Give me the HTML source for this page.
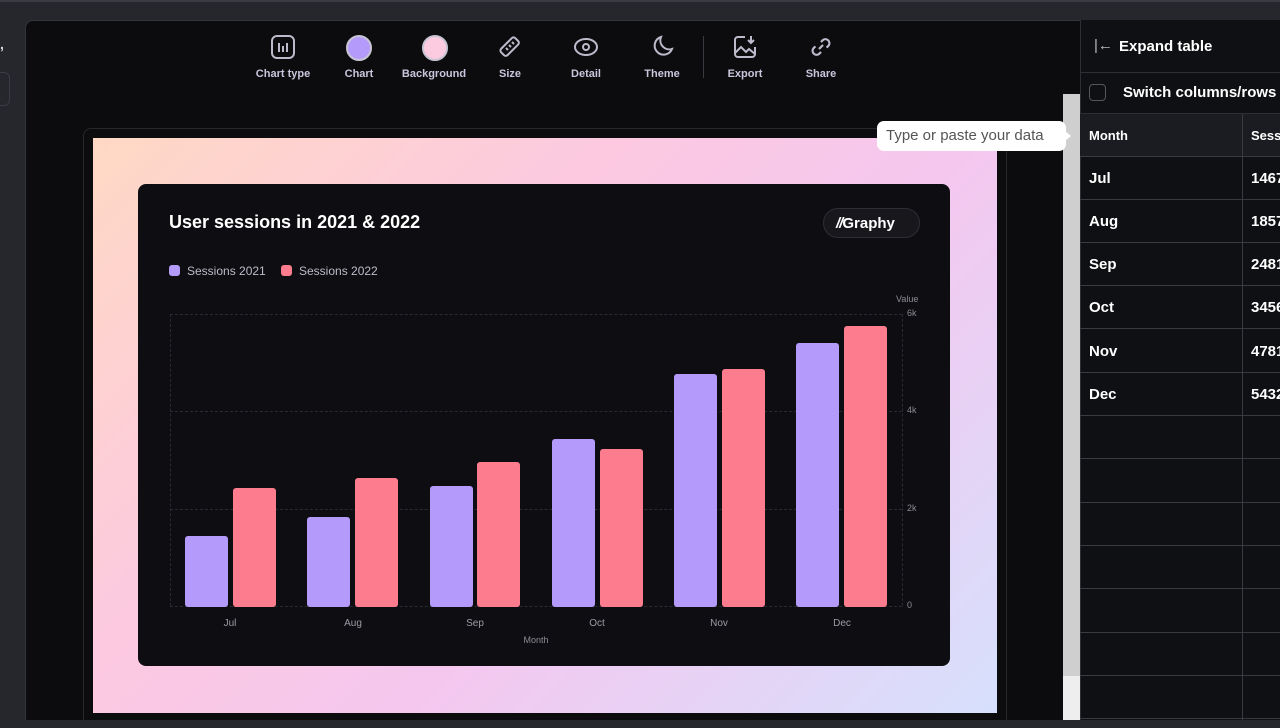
<!DOCTYPE html>
<html><head><meta charset="utf-8"><style>
*{margin:0;padding:0;box-sizing:border-box}
body{width:1280px;height:720px;overflow:hidden;background:#25272d;font-family:"Liberation Sans",sans-serif;position:relative}
.a{position:absolute}
.tb{color:#c9c6dc;font-size:11px;text-align:center;width:80px;font-weight:bold}
.ic{position:absolute;width:26px;height:26px}
.bar{position:absolute;width:43px;border-radius:3px}
.p{background:#b49bfb}.r{background:#fd7d8e}
.gl{position:absolute;left:170px;width:732px;border-top:1px dashed #2a2a32}
.yl{position:absolute;left:907px;color:#8b8b95;font-size:9px}
.xl{position:absolute;top:618px;color:#9b9ba5;font-size:10px;width:60px;text-align:center}
.row{position:absolute;left:1080px;width:200px;height:43px;border-bottom:1px solid #3a3b40;color:#fff;font-weight:bold;font-size:15px}
.row span{position:absolute;left:9px;top:13px}
.row b{position:absolute;left:171px;top:13px}
</style></head><body>
<div class="a" style="left:0;top:0;width:1280px;height:2px;background:#3a3c44"></div>
<div class="a" style="left:0;top:72px;width:10px;height:34px;border:1px solid #3a3c44;border-left:none;border-radius:0 6px 6px 0"></div>
<div class="a" style="left:0;top:36px;color:#ddd;font-size:14px;font-weight:bold">,</div>
<div class="a" style="left:25px;top:20px;width:1060px;height:700px;background:#0c0c0f;border-radius:8px 0 0 0;border-top:1px solid #33353c;border-left:1px solid #33353c"></div>
<svg class="ic" style="left:270px;top:34px" viewBox="0 0 26 26" fill="none" stroke="#bdbbcb" stroke-width="2"><rect x="2" y="2" width="22" height="22" rx="5"/><path d="M9 9v9M13 12v6M17 9v9"/></svg>
<div class="a tb" style="left:243px;top:68px">Chart type</div>
<div class="a" style="left:346px;top:35px;width:26px;height:26px;border-radius:50%;background:#b49bfb;border:2px solid #c8c6d4"></div>
<div class="a tb" style="left:319px;top:68px">Chart</div>
<div class="a" style="left:422px;top:35px;width:26px;height:26px;border-radius:50%;background:#fccbe0;border:2px solid #c8c6d4"></div>
<div class="a tb" style="left:394px;top:68px">Background</div>
<svg class="ic" style="left:497px;top:34px" viewBox="0 0 26 26" fill="none" stroke="#bdbbcb" stroke-width="2"><rect x="3" y="8" width="20" height="9" rx="2.5" transform="rotate(-45 13 13)"/><path d="M9 14l2 2M12 11l2 2M15 8l2 2"/></svg>
<div class="a tb" style="left:470px;top:68px">Size</div>
<svg class="ic" style="left:573px;top:34px" viewBox="0 0 26 26" fill="none" stroke="#bdbbcb" stroke-width="2"><ellipse cx="13" cy="13" rx="11" ry="8"/><circle cx="13" cy="13" r="3"/></svg>
<div class="a tb" style="left:546px;top:68px">Detail</div>
<svg class="ic" style="left:649px;top:34px" viewBox="0 0 26 26" fill="none" stroke="#bdbbcb" stroke-width="2"><path d="M12 3a9 9 0 1 0 11 12A9 9 0 0 1 12 3z"/></svg>
<div class="a tb" style="left:622px;top:68px">Theme</div>
<div class="a" style="left:703px;top:36px;width:1px;height:42px;background:#3a3b42"></div>
<svg class="ic" style="left:732px;top:34px" viewBox="0 0 26 26" fill="none" stroke="#bdbbcb" stroke-width="2"><path d="M13 3H6a3 3 0 0 0-3 3v14a3 3 0 0 0 3 3h14a3 3 0 0 0 3-3v-7"/><path d="M3 19l6-6 5 5 3-3 6 5"/><path d="M19 2v7M16 6l3 3 3-3"/></svg>
<div class="a tb" style="left:705px;top:68px">Export</div>
<svg class="ic" style="left:808px;top:34px" viewBox="0 0 26 26" fill="none" stroke="#bdbbcb" stroke-width="2.2"><path d="M11 15l4-4"/><path d="M13 8l2-2a4 4 0 0 1 5.6 5.6l-2 2"/><path d="M13 18l-2 2a4 4 0 0 1-5.6-5.6l2-2"/></svg>
<div class="a tb" style="left:781px;top:68px">Share</div>
<div class="a" style="left:83px;top:128px;width:924px;height:600px;border:1px solid #26272c;border-radius:8px"></div>
<div class="a" style="left:93px;top:138px;width:904px;height:575px;background:linear-gradient(135deg,#ffd9c4 0%,#fcc9e0 35%,#f5c7ef 60%,#d6e0fc 100%)"></div>
<div class="a" style="left:138px;top:184px;width:812px;height:482px;background:#0e0e12;border-radius:8px"></div>
<div class="a" style="left:169px;top:212px;color:#fff;font-size:18px;font-weight:bold">User sessions in 2021 &amp; 2022</div>
<div class="a" style="left:823px;top:208px;width:97px;height:30px;border-radius:15px;background:#17171c;border:1px solid #2e2e36;color:#fff;font-weight:bold;font-size:15px;padding:6px 0 0 12px"><i style="font-style:italic;letter-spacing:-1px">//</i>Graphy</div>
<div class="a" style="left:169px;top:265px;width:11px;height:11px;border-radius:3px;background:#b49bfb"></div>
<div class="a" style="left:187px;top:264px;color:#bcbac8;font-size:12px">Sessions 2021</div>
<div class="a" style="left:281px;top:265px;width:11px;height:11px;border-radius:3px;background:#fd7d8e"></div>
<div class="a" style="left:299px;top:264px;color:#bcbac8;font-size:12px">Sessions 2022</div>
<div class="a" style="left:896px;top:294px;color:#8b8b95;font-size:9px">Value</div>
<div class="gl" style="top:314px"></div><div class="gl" style="top:411px"></div><div class="gl" style="top:509px"></div><div class="gl" style="top:606px"></div>
<div class="a" style="left:170px;top:314px;height:292px;border-left:1px dashed #2a2a32"></div>
<div class="a" style="left:902px;top:314px;height:292px;border-left:1px dashed #2a2a32"></div>
<div class="yl" style="top:308px">6k</div><div class="yl" style="top:405px">4k</div><div class="yl" style="top:503px">2k</div><div class="yl" style="top:600px">0</div>
<div class="bar p" style="left:185px;top:536px;height:71px"></div><div class="bar r" style="left:233px;top:488px;height:119px"></div>
<div class="bar p" style="left:307px;top:517px;height:90px"></div><div class="bar r" style="left:355px;top:478px;height:129px"></div>
<div class="bar p" style="left:430px;top:486px;height:121px"></div><div class="bar r" style="left:477px;top:462px;height:145px"></div>
<div class="bar p" style="left:552px;top:439px;height:168px"></div><div class="bar r" style="left:600px;top:449px;height:158px"></div>
<div class="bar p" style="left:674px;top:374px;height:233px"></div><div class="bar r" style="left:722px;top:369px;height:238px"></div>
<div class="bar p" style="left:796px;top:343px;height:264px"></div><div class="bar r" style="left:844px;top:326px;height:281px"></div>
<div class="xl" style="left:200px">Jul</div><div class="xl" style="left:323px">Aug</div><div class="xl" style="left:445px">Sep</div><div class="xl" style="left:567px">Oct</div><div class="xl" style="left:689px">Nov</div><div class="xl" style="left:812px">Dec</div>
<div class="a" style="left:506px;top:635px;color:#8b8b95;font-size:9px;width:60px;text-align:center">Month</div>
<div class="a" style="left:1063px;top:94px;width:17px;height:582px;background:#cfcfcf"></div>
<div class="a" style="left:1063px;top:676px;width:17px;height:44px;background:#eeeeee"></div>
<div class="a" style="left:877px;top:121px;width:189px;height:30px;background:#fff;border-radius:7px;color:#555;font-size:15px;padding:6px 0 0 9px;white-space:nowrap">Type or paste your data</div>
<div class="a" style="left:1065px;top:131px;width:0;height:0;border-top:5px solid transparent;border-bottom:5px solid transparent;border-left:6px solid #fff"></div>
<div class="a" style="left:1080px;top:20px;width:200px;height:700px;background:#0f1013;border-left:1px solid #2e2f35"></div>
<div class="a" style="left:1080px;top:72px;width:200px;height:1px;background:#2e2f35"></div>
<div class="a" style="left:1080px;top:113px;width:200px;height:1px;background:#2e2f35"></div>
<div class="a" style="left:1094px;top:37px;color:#bbb;font-size:15px">|←</div>
<div class="a" style="left:1119px;top:38px;color:#fff;font-size:15px;font-weight:bold">Expand table</div>
<div class="a" style="left:1089px;top:84px;width:17px;height:17px;border:1px solid #55565c;border-radius:4px"></div>
<div class="a" style="left:1123px;top:84px;color:#fff;font-size:15px;font-weight:bold;white-space:nowrap">Switch columns/rows</div>
<div class="row" style="top:114px;background:#1b1c21;font-size:13px"><span style="top:14px">Month</span><b style="top:14px">Sess</b></div>
<div class="row" style="top:157px"><span>Jul</span><b>1467</b></div>
<div class="row" style="top:200px"><span>Aug</span><b>1857</b></div>
<div class="row" style="top:243px"><span>Sep</span><b>2481</b></div>
<div class="row" style="top:286px"><span>Oct</span><b>3456</b></div>
<div class="row" style="top:330px"><span>Nov</span><b>4781</b></div>
<div class="row" style="top:373px"><span>Dec</span><b>5432</b></div>
<div class="row" style="top:416px"></div><div class="row" style="top:460px"></div><div class="row" style="top:503px"></div><div class="row" style="top:546px"></div><div class="row" style="top:590px"></div><div class="row" style="top:633px"></div><div class="row" style="top:676px"></div>
<div class="a" style="left:1242px;top:114px;width:1px;height:606px;background:#3a3b40"></div>
</body></html>
